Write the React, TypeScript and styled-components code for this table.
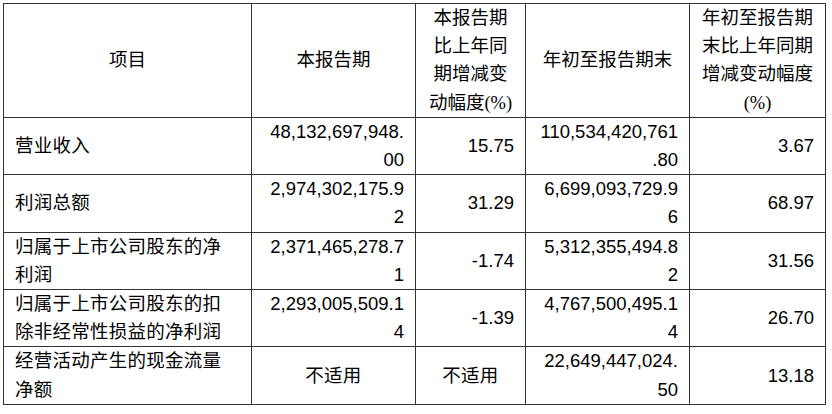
import React from "react";
import styled, { createGlobalStyle } from "styled-components";

const GlobalStyle = createGlobalStyle`
  html, body {
    margin: 0;
    padding: 0;
    background: #ffffff;
  }
  body {
    font-family: "Liberation Sans", "Noto Sans CJK SC", sans-serif;
    color: #000;
  }
`;

const Page = styled.div`
  padding: 3px;
`;

const Table = styled.table`
  border-collapse: collapse;
  table-layout: fixed;
  width: 822px;
  font-size: 18.5px;
  line-height: 28.2px;
  color: #000;
`;

const Cell = styled.td<{ $align?: "left" | "right" | "center"; $cjk?: boolean }>`
  border: 1px solid #333;
  padding: 0 11px;
  text-align: ${(p) => p.$align ?? "left"};
  vertical-align: middle;
  white-space: nowrap;
  letter-spacing: ${(p) => (p.$cjk ? "0.25px" : "0")};
`;

const HeadCell = styled.th`
  border: 1px solid #333;
  padding: 0;
  text-align: center;
  vertical-align: middle;
  font-weight: 400;
  white-space: nowrap;
`;

const Line = styled.span`
  display: block;
`;

const Pct = styled.span`
  font-family: "Liberation Serif", serif;
`;

type Row = {
  label: string[];
  current: string[];
  currentChange: string[];
  ytd: string[];
  ytdChange: string[];
  centerCurrent?: boolean;
};

const rows: Row[] = [
  {
    label: ["营业收入"],
    current: ["48,132,697,948.", "00"],
    currentChange: ["15.75"],
    ytd: ["110,534,420,761", ".80"],
    ytdChange: ["3.67"],
  },
  {
    label: ["利润总额"],
    current: ["2,974,302,175.9", "2"],
    currentChange: ["31.29"],
    ytd: ["6,699,093,729.9", "6"],
    ytdChange: ["68.97"],
  },
  {
    label: ["归属于上市公司股东的净", "利润"],
    current: ["2,371,465,278.7", "1"],
    currentChange: ["-1.74"],
    ytd: ["5,312,355,494.8", "2"],
    ytdChange: ["31.56"],
  },
  {
    label: ["归属于上市公司股东的扣", "除非经常性损益的净利润"],
    current: ["2,293,005,509.1", "4"],
    currentChange: ["-1.39"],
    ytd: ["4,767,500,495.1", "4"],
    ytdChange: ["26.70"],
  },
  {
    label: ["经营活动产生的现金流量", "净额"],
    current: ["不适用"],
    currentChange: ["不适用"],
    ytd: ["22,649,447,024.", "50"],
    ytdChange: ["13.18"],
    centerCurrent: true,
  },
];

const Lines = ({ lines }: { lines: string[] }) => (
  <>
    {lines.map((l, i) => (
      <Line key={i}>{l}</Line>
    ))}
  </>
);

export default function App() {
  return (
    <>
      <GlobalStyle />
      <Page>
        <Table>
          <colgroup>
            <col style={{ width: 248 }} />
            <col style={{ width: 164 }} />
            <col style={{ width: 110 }} />
            <col style={{ width: 164 }} />
            <col style={{ width: 136 }} />
          </colgroup>
          <thead>
            <tr>
              <HeadCell>项目</HeadCell>
              <HeadCell>本报告期</HeadCell>
              <HeadCell>
                <Line>本报告期</Line>
                <Line>比上年同</Line>
                <Line>期增减变</Line>
                <Line>
                  动幅度<Pct>(%)</Pct>
                </Line>
              </HeadCell>
              <HeadCell>年初至报告期末</HeadCell>
              <HeadCell>
                <Line>年初至报告期</Line>
                <Line>末比上年同期</Line>
                <Line>增减变动幅度</Line>
                <Line>
                  <Pct>(%)</Pct>
                </Line>
              </HeadCell>
            </tr>
          </thead>
          <tbody>
            {rows.map((r, i) => (
              <tr key={i}>
                <Cell $align="left" $cjk>
                  <Lines lines={r.label} />
                </Cell>
                <Cell $align={r.centerCurrent ? "center" : "right"} $cjk={r.centerCurrent}>
                  <Lines lines={r.current} />
                </Cell>
                <Cell $align={r.centerCurrent ? "center" : "right"} $cjk={r.centerCurrent}>
                  <Lines lines={r.currentChange} />
                </Cell>
                <Cell $align="right">
                  <Lines lines={r.ytd} />
                </Cell>
                <Cell $align="right">
                  <Lines lines={r.ytdChange} />
                </Cell>
              </tr>
            ))}
          </tbody>
        </Table>
      </Page>
    </>
  );
}
